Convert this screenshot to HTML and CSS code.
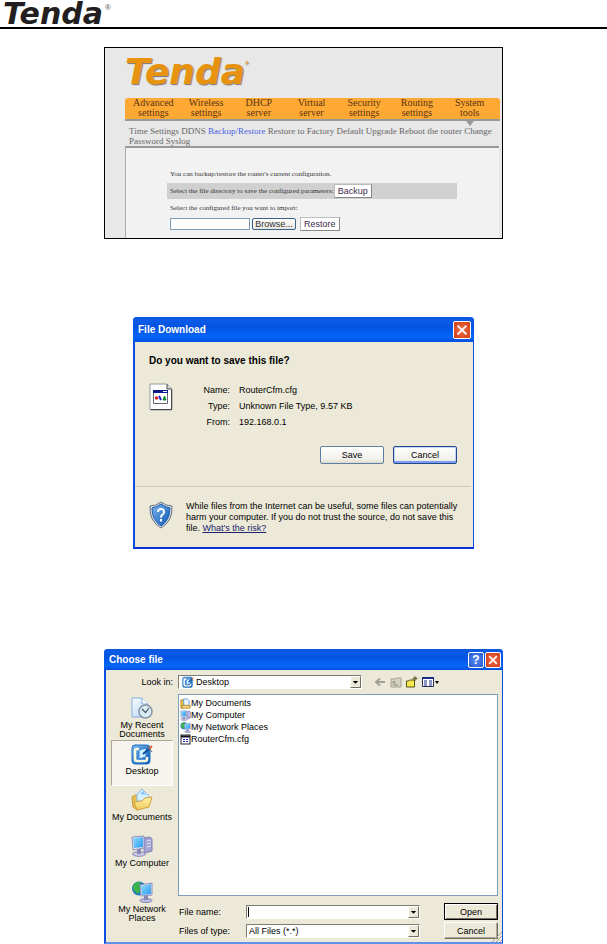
FILE: index.html
```html
<!DOCTYPE html>
<html lang="en">
<head>
<meta charset="utf-8">
<title>Tenda router manual: backup and restore</title>
<link rel="stylesheet" href="styles.css">
</head>
<body>
<svg class="defs" aria-hidden="true">
  <defs>
    <linearGradient id="screen" x1="0" y1="0" x2="1" y2="1"><stop offset="0" stop-color="#8fdcfb"/><stop offset="1" stop-color="#2c9af0"/></linearGradient>
    <linearGradient id="paper" x1="0" y1="0" x2="1" y2="1"><stop offset="0" stop-color="#fff"/><stop offset="1" stop-color="#a9cdf5"/></linearGradient>
    <linearGradient id="folder" x1="0" y1="0" x2="0" y2="1"><stop offset="0" stop-color="#fff2a8"/><stop offset="1" stop-color="#f2cb5a"/></linearGradient>
    <linearGradient id="blue" x1="0" y1="0" x2="1" y2="1"><stop offset="0" stop-color="#7db8ee"/><stop offset="1" stop-color="#0b55b4"/></linearGradient>
    <symbol id="i-desktop" viewBox="0 0 22 22">
      <rect x="1" y="2" width="18" height="19" rx="3" fill="url(#blue)" stroke="#1b72c5"/>
      <path d="M8 6H5.500Q4 6 4 8v8q0 2 2 2h8q2 0 2-2v-2" fill="none" stroke="#fffbe0" stroke-width="2.500"/>
      <path d="M8 7l7-2v9l-7 2z" fill="#d4ecff" stroke="#2a85d8"/>
      <path d="M12 11l6-5" stroke="#0a4b9e" stroke-width="2"/>
      <path d="M18 6l3-3" stroke="#e2613c" stroke-width="2"/>
      <path d="M16 3l5 6" stroke="#666" stroke-width="1"/>
    </symbol>
    <symbol id="i-recent" viewBox="0 0 22 22">
      <path d="M1 1h10l6 6v13H1z" fill="url(#paper)" stroke="#86aee0"/>
      <path d="M11 1v6h6" fill="#fff" stroke="#86aee0"/>
      <circle cx="14.500" cy="14.500" r="6.500" fill="#d9edf5" stroke="#8c98a5" stroke-width="1.600"/>
      <path d="M11 12l3.500 3.500L18 11" fill="none" stroke="#44515f" stroke-width="1.200"/>
    </symbol>
    <symbol id="i-docs" viewBox="0 0 22 22">
      <path d="M1 8l3-2 4 1 9 2v8L6 21l-4-3z" fill="#eac055" stroke="#c79b38"/>
      <path d="M11 0l7 7-2 6-10-1V5z" fill="#d6efff" stroke="#83b9e5"/>
      <path d="M9 5l3-3 3 4z" fill="#83c2f3"/>
      <path d="M3 13l8-1 3-3 7-1-3 10-12 3z" fill="url(#folder)" stroke="#cfa344"/>
    </symbol>
    <symbol id="i-folderdoc" viewBox="0 0 12 12">
      <path d="M1 2h3v9H1z" fill="#edc653" stroke="#b18a2a"/>
      <path d="M4 1h4l2 2v7H4z" fill="#eaf5ff" stroke="#6d9bcc"/>
      <path d="M2 8h9v3H2z" fill="#f7dc7e" stroke="#b18a2a"/>
    </symbol>
    <symbol id="i-computer" viewBox="0 0 22 22">
      <path d="M13 3l6-1 2 2v12l-7 2-1-2z" fill="#a3a3d4" stroke="#7f7fb4"/>
      <path d="M16 6l4-1M16 9l4-1M16 12l4-1" stroke="#e4e4f7"/>
      <ellipse cx="8" cy="19" rx="6.500" ry="2.300" fill="#c9c9e3" stroke="#8686b5"/>
      <path d="M6 14h4v5H6z" fill="#8888b8"/>
      <path d="M1 2l12-1v12L2 15z" fill="#e5e5f4" stroke="#9090bb"/>
      <path d="M2 3l10-1v10L3 13z" fill="url(#screen)"/>
    </symbol>
    <symbol id="i-network" viewBox="0 0 22 22">
      <circle cx="8" cy="7.500" r="7" fill="#2878c9"/>
      <path d="M2 4q4-4 8-3L8 5l3 2-4 6-4-3-1-3z" fill="#3bb54a"/>
      <ellipse cx="15" cy="19.500" rx="6" ry="2" fill="#bdbddd" stroke="#8686b5"/>
      <path d="M13 14h4v5h-4z" fill="#8888b8"/>
      <path d="M9 4l12-2v12l-11 1z" fill="#e5e5f4" stroke="#8d8dbd"/>
      <path d="M10 5l10-2v10l-9 1z" fill="url(#screen)"/>
    </symbol>
    <symbol id="i-cfg" viewBox="0 0 11 11">
      <rect x="1" y="1" width="9" height="9" fill="#fff" stroke="#222"/>
      <path d="M1 2.500h9" stroke="#112" stroke-width="2"/>
      <path d="M3 5.500h2M6 5.500h2M3 7.500h2M6 7.500h2" stroke="#22a"/>
    </symbol>
    <symbol id="i-close" viewBox="0 0 18 18">
      <path d="M4 4l10 10M14 4L4 14" stroke="#fff" stroke-width="2"/>
    </symbol>
    <symbol id="i-drop" viewBox="0 0 10 10"><path d="M2 4h6L5 7z" fill="#000"/></symbol>
  </defs>
</svg>

<header class="page-head">
  <span class="brand">Tenda</span><span class="reg">®</span>
</header>

<main class="page">
  <section class="router">
    <div class="router-logo">Tenda<span class="router-reg">›</span></div>
    <nav class="tabs">
      <a href="#">Advanced<br>settings</a>
      <a href="#">Wireless<br>settings</a>
      <a href="#">DHCP<br>server</a>
      <a href="#">Virtual<br>server</a>
      <a href="#">Security<br>settings</a>
      <a href="#">Routing<br>settings</a>
      <a href="#" class="current">System<br>tools</a>
    </nav>
    <nav class="subnav">
      <a href="#">Time Settings</a> <a href="#">DDNS</a> <a href="#" class="on">Backup/Restore</a> <a href="#">Restore to Factory Default</a> <a href="#">Upgrade</a> <a href="#">Reboot the router</a> <a href="#">Change Password</a> <a href="#">Syslog</a>
    </nav>
    <div class="panel">
      <p class="line">You can backup/restore the router's current configuration.</p>
      <div class="line band"><span>Select the file directory to save the configured parameters:</span><button class="flat">Backup</button></div>
      <label class="line" for="import">Select the configured file you want to import:</label>
      <div class="import-row">
        <input id="import" type="text"><button class="browse">Browse...</button><button class="flat">Restore</button>
      </div>
    </div>
  </section>

  <section class="window download">
    <header class="titlebar">
      <h2>File Download</h2>
      <button class="tb close" aria-label="Close"><svg><use href="#i-close"/></svg></button>
    </header>
    <div class="ask">
      <h3>Do you want to save this file?</h3>
      <div class="file">
        <svg class="file-icon" viewBox="0 0 24 28" aria-hidden="true">
          <path d="M1 1h17l5 5v21H1z" fill="#fff" stroke="#999"/>
          <path d="M18 1v5h5" fill="#ddd" stroke="#444"/>
          <path d="M22.500 7v19.500H2" fill="none" stroke="#444"/>
          <path d="M4.500 7.500h14v13h-14z" fill="#fff" stroke="#667"/>
          <path d="M4 8.500h15" stroke="#0a1a8c" stroke-width="3"/>
          <path d="M14 8.500h4" stroke="#fff"/>
          <circle cx="7.500" cy="15" r="1.700" fill="#d22"/><path d="M10 13l2 4" stroke="#22c" stroke-width="2"/><path d="M14 17l1.500-4 1.500 4z" fill="#183" stroke="#183"/>
        </svg>
        <dl>
          <dt>Name:</dt><dd>RouterCfm.cfg</dd>
          <dt>Type:</dt><dd>Unknown File Type, 9.57 KB</dd>
          <dt>From:</dt><dd>192.168.0.1</dd>
        </dl>
      </div>
      <div class="actions"><button class="xp">Save</button><button class="xp focus">Cancel</button></div>
    </div>
    <div class="warn">
      <svg class="shield" viewBox="0 0 24 28" aria-hidden="true">
        <path d="M12 1q5 4 11 4 1 15-11 22Q0 20 1 5q6 0 11-4z" fill="#d5dbe4" stroke="#68727f"/>
        <path d="M12 3q4 3 9 4 0 12-9 18Q3 19 3 7q5-1 9-4z" fill="url(#blue)" stroke="#1f5cab"/>
        <path d="M9 11q0-3 3-3t3 3q0 1.500-1.500 2.500T12 16.500M12 18v2.500" fill="none" stroke="#fff" stroke-width="2"/>
      </svg>
      <p>While files from the Internet can be useful, some files can potentially harm your computer. If you do not trust the source, do not save this file. <a href="#">What's the risk?</a></p>
    </div>
  </section>

  <section class="window chooser">
    <header class="titlebar">
      <h2>Choose file</h2>
      <button class="tb help" aria-label="Help">?</button>
      <button class="tb close" aria-label="Close"><svg><use href="#i-close"/></svg></button>
    </header>
    <div class="chooser-body">
      <label class="look-label" for="look">Look in:</label>
      <div class="look-row">
        <div class="combo with-icon">
          <svg class="combo-icon"><use href="#i-desktop"/></svg>
          <select id="look"><option>Desktop</option></select>
          <span class="drop"><svg><use href="#i-drop"/></svg></span>
        </div>
        <div class="tools">
          <button aria-label="Back"><svg viewBox="0 0 12 12"><path d="M11 6H3M6 2.500L2 6l4 3.500" fill="none" stroke="#a3a193" stroke-width="2"/></svg></button>
          <button aria-label="Up one level"><svg viewBox="0 0 12 12"><path d="M1 3h4l1-1h5v9H1z" fill="#d4d1bf" stroke="#a3a193"/><path d="M4 9V5M2.500 6.500L4 5l1.500 1.500M4 9h4" fill="none" stroke="#8f8d80"/></svg></button>
          <button aria-label="New folder"><svg viewBox="0 0 12 12"><path d="M.500 5h2l1-1h5v7h-8z" fill="#f5e94c" stroke="#55501c"/><path d="M9 0v5M6.500 2.500h5M7.500 1l3 3M10.500 1l-3 3" stroke="#5a5320" stroke-width=".800"/></svg></button>
          <button class="view" aria-label="View menu"><svg viewBox="0 0 18 12"><path d="M.500 1.500h11v9h-11z" fill="#fff" stroke="#222a5c"/><path d="M0 2h12" stroke="#1a2a8c" stroke-width="2"/><path d="M2 5h3M7 5h3M2 7h3M7 7h3M2 9h3M7 9h3" stroke="#1a2a8c"/><path d="M13 5h4l-2 3z" fill="#000"/></svg></button>
        </div>
      </div>
      <nav class="places">
        <button><svg><use href="#i-recent"/></svg>My Recent<br>Documents</button>
        <button class="selected"><svg><use href="#i-desktop"/></svg>Desktop</button>
        <button><svg><use href="#i-docs"/></svg>My Documents</button>
        <button><svg><use href="#i-computer"/></svg>My Computer</button>
        <button><svg><use href="#i-network"/></svg>My Network<br>Places</button>
      </nav>
      <div class="chooser-main">
        <ul class="files">
          <li><svg><use href="#i-folderdoc"/></svg>My Documents</li>
          <li><svg><use href="#i-computer"/></svg>My Computer</li>
          <li><svg><use href="#i-network"/></svg>My Network Places</li>
          <li><svg><use href="#i-cfg"/></svg>RouterCfm.cfg</li>
        </ul>
        <div class="fields">
          <label for="fname">File name:</label>
          <div class="combo"><input id="fname" type="text"><span class="caret"></span><span class="drop"><svg><use href="#i-drop"/></svg></span></div>
          <button class="classic default">Open</button>
          <label for="ftype">Files of type:</label>
          <div class="combo"><select id="ftype"><option>All Files (*.*)</option></select><span class="drop"><svg><use href="#i-drop"/></svg></span></div>
          <button class="classic">Cancel</button>
        </div>
      </div>
      <svg class="grip" viewBox="0 0 10 10" aria-hidden="true"><path d="M0 10L10 0M4 10l6-6M8 10l2-2" stroke="#a5a294"/></svg>
    </div>
  </section>
</main>
</body>
</html>
```
FILE: styles.css
```css
* { box-sizing: border-box; }
body { margin: 0; background: #fff; color: #000; font-family: "Liberation Sans", sans-serif; font-size: 9px; line-height: 12px; }
h2, h3, p, dl, dd, ul { margin: 0; padding: 0; }
button, input, select { font: inherit; color: inherit; margin: 0; padding: 0; border-radius: 0; }
a { color: inherit; text-decoration: none; }
svg { display: block; }
.defs { position: absolute; width: 0; height: 0; }

.page-head { display: flex; align-items: flex-start; height: 29px; padding-left: 3px; border-bottom: 2px solid #000; }
.brand { font: italic bold 30px/27px "DejaVu Sans", sans-serif; color: #231f20; }
.reg { margin-left: 2px; font-size: 8px; line-height: 16px; color: #555; }
.page { display: flex; flex-direction: column; align-items: center; padding-top: 18px; }

/* Router settings page */
.router { width: 100%; max-width: 399px; height: 192px; padding-left: 20px; border: 1px solid #000; background: #e8e8e8; font-family: "Liberation Serif", serif; overflow: hidden; }
.router-logo { height: 50px; padding-top: 6px; font: italic bold 36px/36px "DejaVu Sans", sans-serif; color: #e8930f; text-shadow: 1px 1px 1px #777; }
.router-reg { font-size: 9px; vertical-align: top; line-height: 16px; }
.tabs { display: grid; grid-template-columns: repeat(7, 1fr); margin-right: 2px; padding: 0 4px 1px 2px; background: #ffa935; border-bottom: 2px solid #999; border-radius: 3px 3px 0 0; font-size: 10px; line-height: 10px; text-align: center; color: #5b3510; }
.current { position: relative; }
.current::after { content: ""; position: absolute; left: 50%; top: 100%; margin-top: 3px; margin-left: -4px; border: 4px solid transparent; border-top: 5px solid #999; border-bottom: 0; }
.subnav { height: 25px; margin-right: 2px; padding: 5px 4px 0 4px; font-size: 9px; line-height: 10px; color: #666; }
.subnav .on { color: #4a5fe0; }
.panel { margin-right: 3px; height: 100px; padding: 17px 42px 0 41px; border-top: 2px solid #999; border-left: 1px solid #aaa; background: #f2f2f2; font-size: 7px; color: #333; }
.line { display: flex; align-items: center; height: 18px; padding-left: 3px; white-space: nowrap; }
.band { height: 16px; background: #d0d0d0; }
.flat { height: 14px; padding: 0 3px; border: 1px solid #bbb; border-right-color: #888; border-bottom-color: #888; background: #fff; font: 9px/12px "Liberation Sans", sans-serif; color: #412c4c; }
.import-row { display: flex; align-items: center; padding-left: 3px; gap: 2px; }
.import-row input { width: 80px; height: 12px; border: 1px solid #7f9db9; background: #fff; }
.import-row .flat { margin-left: 2px; }
.browse { width: 44px; height: 12px; border: 1px solid #3c6289; border-radius: 2px; background: linear-gradient(#fff, #e6e5dd); font: 9px/10px "Liberation Sans", sans-serif; color: #333; }

/* Windows */
.window { width: 100%; border: 2px solid #0a4fe0; border-top: 0; border-right-width: 1px; border-radius: 4px 4px 0 0; background: #ece9d8; }
.titlebar { display: flex; align-items: center; gap: 1px; margin: 0 -1px 0 -2px; padding: 0 3px 0 5px; border-radius: 4px 4px 0 0; background: linear-gradient(#0a57d8, #0a5be8 15%, #0453e0 40%, #0566fb 80%, #0450dc); color: #fff; }
.titlebar h2 { flex: 1; font-size: 10px; line-height: 12px; }
.tb { border: 1px solid #fff; border-radius: 2px; background: radial-gradient(#f0714c, #cf3a14); color: #fff; }
.tb svg { width: 100%; height: 100%; }
.help { background: radial-gradient(#5c8df2, #2458cf); font-weight: bold; font-size: 12px; line-height: 12px; }

/* File Download */
.download { max-width: 341px; margin-top: 78px; border-bottom-color: #0831d9; }
.download .titlebar { height: 25px; }
.download .tb { width: 18px; height: 18px; }
.ask { height: 144px; padding: 13px 16px 0 14px; }
.ask h3 { font-size: 10px; line-height: 12px; }
.file { display: flex; margin-top: 15px; }
.file-icon { width: 24px; height: 28px; margin-top: 1px; }
.file dl { display: grid; grid-template-columns: 57px 1fr; column-gap: 9px; line-height: 16px; }
.file dt { text-align: right; }
.actions { display: flex; justify-content: flex-end; gap: 9px; margin-top: 16px; }
.xp { width: 64px; height: 18px; border: 1px solid #5d7fa3; border-radius: 2px; background: linear-gradient(#fff, #f0efe8 80%, #dcd8cb); }
.xp.focus { border-color: #24468c; box-shadow: inset 0 -2px 0 #7b9cf0, inset 0 0 0 1px #c3d4fb; }
.warn { display: flex; gap: 13px; height: 61px; margin: 0 2px 0 0; padding: 14px 12px 0 14px; border-top: 1px solid #cbc8bd; line-height: 11px; }
.shield { flex: none; width: 24px; height: 28px; }
.warn a { text-decoration: underline; color: #22226c; }

/* Choose file */
.chooser { max-width: 399px; margin-top: 100px; border-bottom-color: #5f92ea; }
.chooser .titlebar { height: 21px; padding-right: 2px; }
.chooser .tb { width: 16px; height: 16px; }
.chooser-body { position: relative; display: grid; grid-template-columns: 62px 1fr; grid-template-rows: 14px auto; column-gap: 5px; row-gap: 5px; height: 272px; padding: 5px 4px 0 5px; }
.look-label { text-align: right; line-height: 14px; }
.look-row { display: flex; gap: 12px; }
.look-row .combo { flex: 0 1 184px; }
.combo { position: relative; display: flex; height: 14px; border: 1px solid #7f7d72; border-right-color: #fff; border-bottom-color: #fff; background: #fff; }
.combo select, .combo input { flex: 1; min-width: 0; border: 0; padding: 0 2px; background: none; appearance: none; outline: 0; line-height: 12px; }
.combo.with-icon select { padding-left: 17px; }
.combo-icon { position: absolute; left: 3px; top: 0; width: 12px; height: 12px; }
.caret { position: absolute; left: 1px; top: 1px; width: 1px; height: 10px; background: #000; }
.drop { flex: none; width: 11px; border: 1px solid #fff; border-right-color: #716f64; border-bottom-color: #716f64; background: #ece9d8; pointer-events: none; }
.drop svg { width: 100%; height: 100%; }
.tools { display: flex; gap: 4px; align-items: center; }
.tools button { border: 0; background: none; }
.tools svg { width: 12px; height: 12px; }
.tools .view svg { width: 18px; }
.places { display: grid; grid-auto-rows: 46px; align-content: start; }
.places button { display: flex; flex-direction: column; align-items: center; padding-top: 2px; border: 1px solid transparent; background: none; line-height: 9px; white-space: nowrap; }
.places svg { width: 22px; height: 22px; margin-bottom: 2px; }
.places .selected { border-color: #aca899 #fff #fff #aca899; background: #f6f4ec; }
.files { height: 202px; padding: 2px 0 0 1px; border: 1px solid #7f9db9; background: #fff; list-style: none; }
.files li { display: flex; align-items: center; height: 12px; line-height: 12px; }
.files svg { width: 11px; height: 11px; }
.fields { display: grid; grid-template-columns: 67px 1fr 54px; align-items: center; row-gap: 2px; padding: 7px 0 0 1px; }
.fields .combo { margin-right: 24px; }
.classic { height: 17px; border: 1px solid #fff; border-right-color: #716f64; border-bottom-color: #716f64; background: #ece9d8; box-shadow: inset -1px -1px 0 #aca899; }
.classic.default { border-color: #000; box-shadow: inset 1px 1px 0 #fff, inset -1px -1px 0 #716f64; }
.grip { position: absolute; right: 0; bottom: 0; width: 10px; height: 10px; }
```
